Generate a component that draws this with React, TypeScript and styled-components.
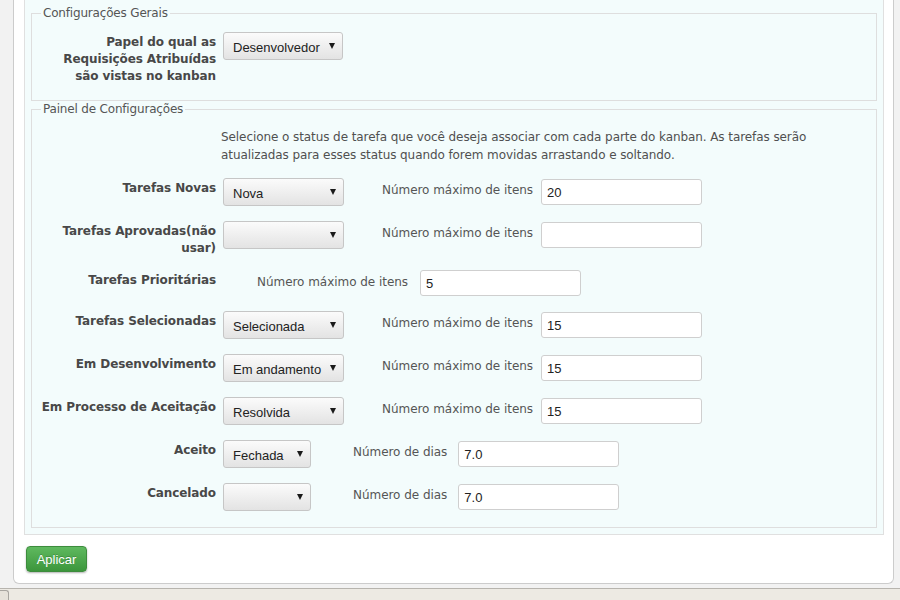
import styled, {createGlobalStyle} from 'styled-components';

const GlobalStyle = createGlobalStyle`
  html, body {
    margin: 0;
    padding: 0;
  }

  body {
    background: #f2f2f2;
    font-family: "DejaVu Sans", Verdana, sans-serif;
    font-size: 12px;
    color: #505050;
  }
`;

const Page = styled.div`
  display: flex;
  flex-direction: column;
  height: 600px;
  overflow: hidden;
`;

const Main = styled.div`
  flex: 1;
  padding: 0 6px 0 13px;
`;

const Panel = styled.div`
  background: #fff;
  border: 1px solid #cccccc;
  border-top: none;
  border-radius: 0 0 6px 6px;
  padding: 0 9px 11px 10px;
`;

const Box = styled.div`
  background: #f3fcfc;
  border: 1px solid #e0e0e0;
  border-top: none;
  padding: 5px 6px 6px 6px;
`;

const Fieldset = styled.fieldset<{$top: number; $bottom: number}>`
  margin: 0;
  min-width: 0;
  border: 1px solid #dedede;
  padding: ${(p) => p.$top}px 10px ${(p) => p.$bottom}px 6px;
`;

const Legend = styled.legend`
  margin-left: 3px;
  padding: 0 2px;
  line-height: 16px;
  font-size: 12px;
  letter-spacing: -0.18px;
  color: #555;
`;

const Description = styled.p`
  margin: 11px 0 7px 183px;
  line-height: 18px;
  letter-spacing: -0.08px;
  color: #505050;
`;

const Row = styled.div`
  display: flex;
  align-items: flex-start;
  padding: 7px 0 8px;
`;

const Label = styled.label`
  flex: 0 0 178px;
  margin: 0 7px -2px 0;
  padding-top: 2px;
  text-align: right;
  font-weight: bold;
  line-height: 17px;
  letter-spacing: -0.1px;
  color: #484848;
`;

const Controls = styled.div`
  display: flex;
  align-items: center;
`;

const SelectBox = styled.div<{$width: number}>`
  box-sizing: border-box;
  display: flex;
  align-items: center;
  justify-content: space-between;
  width: ${(p) => p.$width}px;
  height: 28px;
  padding: 0 7px 0 9px;
  border: 1px solid #c6c6c6;
  border-radius: 3px;
  background: linear-gradient(#fbfbfb, #e3e3e3);
  font-family: "Liberation Sans", Arial, sans-serif;
  font-size: 13px;
  color: #222;
`;

const SelectText = styled.span`
  padding-top: 2px;
`;

const Arrow = styled.span`
  width: 0;
  height: 0;
  border-left: 3px solid transparent;
  border-right: 3px solid transparent;
  border-top: 6px solid #1a1a1a;
`;

const FieldNote = styled.span<{$gap: number}>`
  align-self: flex-start;
  margin: 4px 0 0 ${(p) => p.$gap}px;
  line-height: 17px;
  letter-spacing: -0.04px;
  color: #555;
  white-space: nowrap;
`;

const NumberInput = styled.input<{$gap: number}>`
  box-sizing: border-box;
  width: 161px;
  height: 26px;
  margin: 0 0 0 ${(p) => p.$gap}px;
  padding: 0 5px;
  border: 1px solid #cfcfcf;
  border-radius: 3px;
  background: #fff;
  font-family: "Liberation Sans", Arial, sans-serif;
  font-size: 13px;
  color: #222;
  outline: none;
`;

const ApplyButton = styled.button`
  display: block;
  width: 61px;
  height: 26px;
  margin: 11px 0 0 2px;
  padding: 0;
  border: 1px solid #3d8c3d;
  border-radius: 4px;
  background: linear-gradient(#5fb95f, #3c963c);
  box-shadow: 0 1px 2px rgba(0, 0, 0, 0.3);
  color: #fff;
  font-family: "Liberation Sans", Arial, sans-serif;
  font-size: 13px;
  text-shadow: 0 -1px 0 rgba(0, 0, 0, 0.2);
  cursor: pointer;
`;

const Footer = styled.div`
  height: 11px;
  border-top: 1px solid #b7b4ae;
  background: #edeae3;
  display: flex;
  align-items: flex-end;
`;

const FooterTab = styled.div`
  width: 8px;
  height: 9px;
  border: 1px solid #a8a5a0;
  border-left: none;
  border-bottom: none;
  border-radius: 0 3px 0 0;
  background: #e6e2da;
`;

type StatusRow = {
  label: string;
  value?: string;
  selectWidth?: number;
  kind: 'max' | 'days';
  amount: string;
};

const statusRows: StatusRow[] = [
  {label: 'Tarefas Novas', value: 'Nova', selectWidth: 121, kind: 'max', amount: '20'},
  {label: 'Tarefas Aprovadas(não usar)', value: '', selectWidth: 121, kind: 'max', amount: ''},
  {label: 'Tarefas Prioritárias', kind: 'max', amount: '5'},
  {label: 'Tarefas Selecionadas', value: 'Selecionada', selectWidth: 121, kind: 'max', amount: '15'},
  {label: 'Em Desenvolvimento', value: 'Em andamento', selectWidth: 121, kind: 'max', amount: '15'},
  {label: 'Em Processo de Aceitação', value: 'Resolvida', selectWidth: 121, kind: 'max', amount: '15'},
  {label: 'Aceito', value: 'Fechada', selectWidth: 88, kind: 'days', amount: '7.0'},
  {label: 'Cancelado', value: '', selectWidth: 88, kind: 'days', amount: '7.0'},
];

function Select({value, width}: {value: string; width: number}) {
  return (
    <SelectBox $width={width}>
      <SelectText>{value}</SelectText>
      <Arrow />
    </SelectBox>
  );
}

function StatusField({row}: {row: StatusRow}) {
  const hasSelect = row.selectWidth !== undefined;
  const note = row.kind === 'max' ? 'Número máximo de itens' : 'Número de dias';
  // gaps measured from the screenshot, they differ a bit per row type
  const noteGap = !hasSelect ? 34 : row.kind === 'max' ? 38 : 42;
  const inputGap = !hasSelect ? 12 : row.kind === 'max' ? 8 : 11;

  return (
    <Row>
      <Label>{row.label}</Label>
      <Controls>
        {hasSelect && <Select value={row.value ?? ''} width={row.selectWidth!} />}
        <FieldNote $gap={noteGap}>{note}</FieldNote>
        <NumberInput $gap={inputGap} defaultValue={row.amount} />
      </Controls>
    </Row>
  );
}

export default function App() {
  return (
    <>
      <GlobalStyle />
      <Page>
        <Main>
          <Panel>
            <Box>
              <Fieldset $top={4} $bottom={9}>
                <Legend>Configurações Gerais</Legend>
                <Row>
                  <Label>Papel do qual as Requisições Atribuídas são vistas no kanban</Label>
                  <Controls>
                    <Select value="Desenvolvedor" width={120} />
                  </Controls>
                </Row>
              </Fieldset>
              <Fieldset $top={0} $bottom={8}>
                <Legend>Painel de Configurações</Legend>
                <Description>
                  Selecione o status de tarefa que você deseja associar com cada parte do kanban. As
                  tarefas serão atualizadas para esses status quando forem movidas arrastando e
                  soltando.
                </Description>
                {statusRows.map((row) => (
                  <StatusField key={row.label} row={row} />
                ))}
              </Fieldset>
            </Box>
            <ApplyButton type="button">Aplicar</ApplyButton>
          </Panel>
        </Main>
        <Footer>
          <FooterTab />
        </Footer>
      </Page>
    </>
  );
}
